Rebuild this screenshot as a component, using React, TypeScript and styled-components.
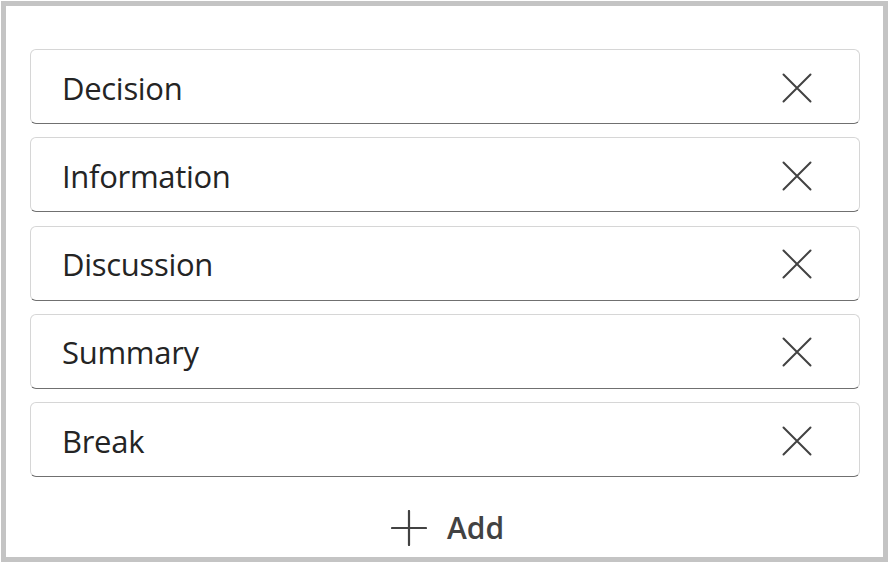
import * as React from 'react'
import styled, { createGlobalStyle } from 'styled-components'

const GlobalStyle = createGlobalStyle`
  html, body {
    margin: 0;
    padding: 0;
    background: #ffffff;
  }

  body {
    font-family: 'Open Sans', 'Noto Sans', sans-serif;
    color: #242424;
  }
`

const Frame = styled.div`
  box-sizing: border-box;
  width: 887px;
  height: 562px;
  margin-left: 1px;
  padding-top: 1px;
`

const Panel = styled.div`
  box-sizing: border-box;
  height: 561px;
  border: 5px solid #c4c4c4;
  padding: 43px 23px 0 24px;
  display: flex;
  flex-direction: column;
`

const TagList = styled.div`
  display: flex;
  flex-direction: column;
  gap: 13.3px;
`

const TagRow = styled.div`
  box-sizing: border-box;
  height: 75px;
  display: flex;
  align-items: center;
  justify-content: space-between;
  padding: 2px 47px 0 31px;
  border: 1px solid #d6d6d6;
  border-bottom: 1.5px solid #707070;
  border-radius: 6px;
  background: #ffffff;
`

const TagLabel = styled.span`
  font-size: 31px;
  letter-spacing: -0.3px;
  color: #242424;
`

const RemoveButton = styled.button`
  display: flex;
  align-items: center;
  justify-content: center;
  width: 30px;
  height: 30px;
  padding: 0;
  border: none;
  background: transparent;
  color: #424242;
  cursor: pointer;
`

const AddButton = styled.button`
  align-self: center;
  display: flex;
  align-items: center;
  gap: 20px;
  margin-top: 30px;
  margin-left: 5px;
  padding: 0;
  border: none;
  background: transparent;
  font-family: 'Open Sans', 'Noto Sans', sans-serif;
  font-size: 30px;
  font-weight: 600;
  color: #424242;
  cursor: pointer;
`

const DismissIcon = () => (
  <svg width='30' height='30' viewBox='0 0 30 30' fill='none'>
    <path d='M1.5 1.5 L28.5 28.5 M28.5 1.5 L1.5 28.5' stroke='currentColor' strokeWidth='2' strokeLinecap='round' />
  </svg>
)

const PlusIcon = () => (
  <svg width='36' height='36' viewBox='0 0 36 36' fill='none'>
    <path d='M18 1 V35 M1 18 H35' stroke='currentColor' strokeWidth='2.2' strokeLinecap='round' />
  </svg>
)

const tags = ['Decision', 'Information', 'Discussion', 'Summary', 'Break']

export default function App() {
  return (
    <>
      <GlobalStyle />
      <Frame>
        <Panel>
          <TagList>
            {tags.map((tag) => (
              <TagRow key={tag}>
                <TagLabel>{tag}</TagLabel>
                <RemoveButton aria-label={`Remove ${tag}`}>
                  <DismissIcon />
                </RemoveButton>
              </TagRow>
            ))}
          </TagList>
          <AddButton>
            <PlusIcon />
            Add
          </AddButton>
        </Panel>
      </Frame>
    </>
  )
}
